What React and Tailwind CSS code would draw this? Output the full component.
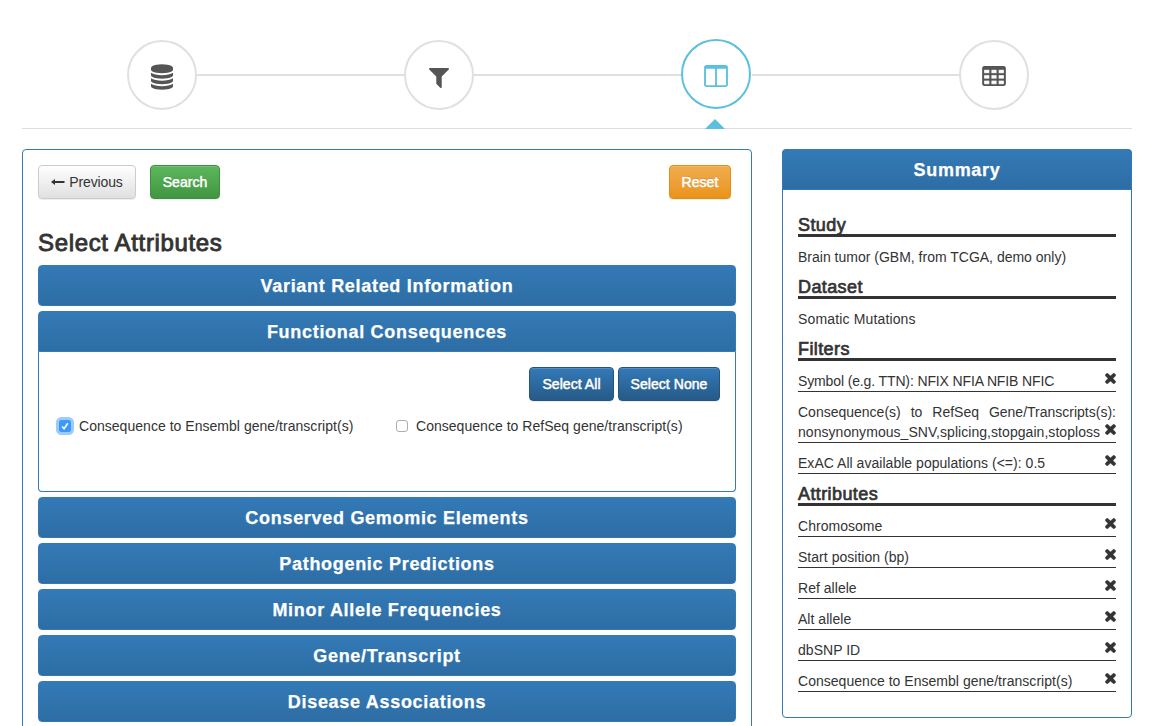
import React from "react";

const PATHS = {
  database:
    "M768 768q237 0 443-43t325-127v170q0 69-103 128t-280 93.5-385 34.5-385-34.5-280-93.5-103-128v-170q119 84 325 127t443 43zm0 768q237 0 443-43t325-127v170q0 69-103 128t-280 93.5-385 34.5-385-34.5-280-93.5-103-128v-170q119 84 325 127t443 43zm0-384q237 0 443-43t325-127v170q0 69-103 128t-280 93.5-385 34.5-385-34.5-280-93.5-103-128v-170q119 84 325 127t443 43zm0-1152q208 0 385 34.5t280 93.5 103 128v128q0 69-103 128t-280 93.5-385 34.5-385-34.5-280-93.5-103-128v-128q0-69 103-128t280-93.5 385-34.5z",
  filter:
    "M1403 39q17 41-14 70l-493 493v742q0 42-39 59-13 5-25 5-27 0-45-19l-256-256q-19-19-19-45v-486l-493-493q-31-29-14-70 17-39 59-39h1280q42 0 59 39z",
  columns:
    "M160 1408h608v-1152h-640v1120q0 13 9.5 22.5t22.5 9.5zm1376-32v-1120h-640v1152h608q13 0 22.5-9.5t9.5-22.5zm128-1216v1216q0 66-47 113t-113 47h-1344q-66 0-113-47t-47-113v-1216q0-66 47-113t113-47h1344q66 0 113 47t47 113z",
  table:
    "M160 0h1344q66 0 113 47t47 113v1088q0 66-47 113t-113 47h-1344q-66 0-113-47t-47-113v-1088q0-66 47-113t113-47zM160 256q-32 0-32 32v192q0 32 32 32h320q32 0 32-32v-192q0-32-32-32zM672 256q-32 0-32 32v192q0 32 32 32h320q32 0 32-32v-192q0-32-32-32zM1184 256q-32 0-32 32v192q0 32 32 32h320q32 0 32-32v-192q0-32-32-32zM160 640q-32 0-32 32v192q0 32 32 32h320q32 0 32-32v-192q0-32-32-32zM672 640q-32 0-32 32v192q0 32 32 32h320q32 0 32-32v-192q0-32-32-32zM1184 640q-32 0-32 32v192q0 32 32 32h320q32 0 32-32v-192q0-32-32-32zM160 1024q-32 0-32 32v192q0 32 32 32h320q32 0 32-32v-192q0-32-32-32zM672 1024q-32 0-32 32v192q0 32 32 32h320q32 0 32-32v-192q0-32-32-32zM1184 1024q-32 0-32 32v192q0 32 32 32h320q32 0 32-32v-192q0-32-32-32z",
  times:
    "M1298 1322q0 40-28 68l-136 136q-28 28-68 28t-68-28l-294-294-294 294q-28 28-68 28t-68-28l-136-136q-28-28-28-68t28-68l294-294-294-294q-28-28-28-68t28-68l136-136q28-28 68-28t68 28l294 294 294-294q28-28 68-28t68 28l136 136q28 28 28 68t-28 68l-294 294 294 294q28 28 28 68z",
};

function Glyph({ name, box, className }) {
  return (
    <svg viewBox={box} className={className} fill="currentColor" fillRule="evenodd" aria-hidden="true">
      <path d={PATHS[name]} />
    </svg>
  );
}

function RemoveIcon() {
  return (
    <Glyph
      name="times"
      box="90 346 1228 1228"
      className="mt-[2px] mr-[0.5px] size-[11px] shrink-0 stroke-current stroke-[50]"
    />
  );
}

function Connector() {
  return <div className="mt-[34px] h-[2px] flex-1 bg-[#e0e0e0]" />;
}

function Step({ children }) {
  return (
    <div className="flex size-[70px] shrink-0 justify-center rounded-full border-2 border-[#e0e0e0] bg-white text-[#555]">
      {children}
    </div>
  );
}

function Wizard() {
  return (
    <div className="mx-[22px] mr-[25px] flex h-[129px] items-start border-b border-[#ddd] pt-10 pr-[103px] pl-[105px]">
      <Step>
        <Glyph name="database" box="0 0 1536 1792" className="mt-[22px] mr-px h-[26px] w-[22px]" />
      </Step>
      <Connector />
      <Step>
        <Glyph name="filter" box="0 0 1408 1408" className="mt-[26px] size-5" />
      </Step>
      <Connector />
      <div className="relative -mt-px -mr-px -ml-px flex w-[72px] shrink-0 pr-[2px]">
        <div className="flex size-[70px] justify-center rounded-full border-2 border-[#5bc0de] bg-white text-[#5bc0de]">
          <Glyph name="columns" box="0 0 1664 1536" className="mt-[24px] h-[22px] w-[24px]" />
        </div>
        <svg viewBox="0 0 20 10" className="absolute top-[80px] left-[24px] h-[10px] w-5" aria-hidden="true">
          <path d="M10 0L20 10H0z" fill="#5bc0de" />
        </svg>
      </div>
      <Connector />
      <Step>
        <Glyph name="table" box="0 0 1664 1408" className="mt-6 h-5 w-6 stroke-current stroke-[20]" />
      </Step>
    </div>
  );
}

function Bar({ title, open }) {
  return (
    <div
      className={
        "flex h-[41px] items-center justify-center border border-[#337ab7] bg-linear-to-b from-[#337ab7] to-[#2e6da4] text-[18px] font-bold tracking-[0.7px] text-white [-webkit-text-stroke:0.25px_white] " +
        (open ? "rounded-t-[4px]" : "rounded-[4px]")
      }
    >
      <span className="pt-px">{title}</span>
    </div>
  );
}

const BUTTON = "flex h-[34px] items-center justify-center rounded-[4px] border text-[14px] leading-5";
const LIGHT_TEXT =
  " tracking-[0.05px] text-white [-webkit-text-stroke:0.5px_white] [text-shadow:0_-1px_0_rgba(0,0,0,0.2)] shadow-[inset_0_1px_0_rgba(255,255,255,0.15),0_1px_1px_rgba(0,0,0,0.075)]";

function Toolbar() {
  return (
    <div className="flex pr-[5px]">
      <button
        className={
          BUTTON +
          " w-[98px] gap-1 border-[#ccc] bg-linear-to-b from-white to-[#e0e0e0] tracking-[-0.12px] text-[#333] shadow-[inset_0_1px_0_rgba(255,255,255,0.15),0_1px_1px_rgba(0,0,0,0.075)]"
        }
      >
        <svg viewBox="0 0 14 8" className="h-2 w-[14px]" fill="currentColor" aria-hidden="true">
          <path d="M0 4L4 1V3H13.5V5H4V7z" />
        </svg>
        Previous
      </button>
      <button
        className={BUTTON + LIGHT_TEXT + " ml-[14px] w-[70px] border-[#3e8f3e] bg-linear-to-b from-[#5cb85c] to-[#419641]"}
      >
        Search
      </button>
      <button
        className={BUTTON + LIGHT_TEXT + " ml-auto w-[62px] border-[#e38d13] bg-linear-to-b from-[#f0ad4e] to-[#eb9316]"}
      >
        Reset
      </button>
    </div>
  );
}

function FunctionalConsequences() {
  const primary = BUTTON + LIGHT_TEXT + " border-[#245580] bg-linear-to-b from-[#337ab7] to-[#265a88]";
  return (
    <section>
      <Bar title="Functional Consequences" open />
      <div className="h-[140px] rounded-b-[4px] border border-t-0 border-[#337ab7] pt-[15px] pr-[15px] pl-5">
        <div className="flex justify-end gap-1">
          <button className={primary + " w-[85px]"}>Select All</button>
          <button className={primary + " w-[102px]"}>Select None</button>
        </div>
        <div className="mt-[15px] flex h-5 items-center text-[14px] tracking-[0.03px]">
          <label className="flex w-[337px] items-center">
            <span className="mr-2 flex size-3 items-center justify-center rounded-[2.5px] bg-[#3b99fc] shadow-[0_0_0_3px_#9dcbfb]">
              <svg viewBox="0 0 12 12" className="size-3" aria-hidden="true">
                <path d="M3.2 6.5L5.1 8.7L8.8 3.2" fill="none" stroke="white" strokeWidth="1.6" />
              </svg>
            </span>
            Consequence to Ensembl gene/transcript(s)
          </label>
          <label className="flex items-center">
            <span className="mr-2 size-3 rounded-[3px] border border-[#adadad] bg-white" />
            Consequence to RefSeq gene/transcript(s)
          </label>
        </div>
      </div>
    </section>
  );
}

function Heading({ children }) {
  return (
    <h4 className="h-[23px] border-b-[3px] border-[#333] pt-px text-[18px] leading-5 tracking-[0.4px] [-webkit-text-stroke:0.7px_#333]">
      {children}
    </h4>
  );
}

function Entry({ children, tight }) {
  return (
    <div className="mt-[10px] flex items-start border-b border-[#333]">
      <div className={"min-w-0 flex-1 leading-5 " + (tight ? "tracking-[-0.13px]" : "tracking-[0.03px]")}>
        {children}
      </div>
      <RemoveIcon />
    </div>
  );
}

const ATTRIBUTES = [
  "Chromosome",
  "Start position (bp)",
  "Ref allele",
  "Alt allele",
  "dbSNP ID",
  "Consequence to Ensembl gene/transcript(s)",
];

function Summary() {
  return (
    <aside className="h-[569px] w-[350px] rounded-[4px] border border-[#337ab7] text-[14px]">
      <div className="-mx-px -mt-px">
        <Bar title="Summary" open />
      </div>
      <div className="px-[15px] pt-[24px]">
        <Heading>Study</Heading>
        <p className="mt-[10px] mb-[9px] leading-5">Brain tumor (GBM, from TCGA, demo only)</p>
        <Heading>Dataset</Heading>
        <p className="mt-[10px] mb-[9px] leading-5 tracking-[0.15px]">Somatic Mutations</p>
        <Heading>Filters</Heading>
        <Entry tight>Symbol (e.g. TTN): NFIX NFIA NFIB NFIC</Entry>
        <div className="mt-[10px] border-b border-[#333] leading-5">
          <div className="flex justify-between">
            <span>Consequence(s)</span>
            <span>to</span>
            <span>RefSeq</span>
            <span>Gene/Transcripts(s):</span>
          </div>
          <div className="flex items-start justify-between">
            <span className="tracking-[0.05px]">nonsynonymous_SNV,splicing,stopgain,stoploss</span>
            <RemoveIcon />
          </div>
        </div>
        <Entry>ExAC All available populations (&lt;=): 0.5</Entry>
        <div className="mt-[9px]">
          <Heading>Attributes</Heading>
        </div>
        {ATTRIBUTES.map((name) => (
          <Entry key={name}>{name}</Entry>
        ))}
      </div>
    </aside>
  );
}

export default function App() {
  return (
    <div className="h-[726px] w-[1157px] overflow-hidden bg-white font-['Liberation_Sans',Arial,sans-serif] text-[#333]">
      <Wizard />
      <main className="mt-5 ml-[22px] flex items-start gap-[30px]">
        <section className="h-[640px] w-[730px] rounded-[4px] border border-[#337ab7] p-[15px]">
          <Toolbar />
          <h3 className="mt-[30px] mb-[9px] text-[24px] leading-[27px] tracking-[0.65px] [-webkit-text-stroke:0.9px_#333]">
            Select Attributes
          </h3>
          <div className="flex flex-col gap-[5px]">
            <Bar title="Variant Related Information" />
            <FunctionalConsequences />
            <Bar title="Conserved Gemomic Elements" />
            <Bar title="Pathogenic Predictions" />
            <Bar title="Minor Allele Frequencies" />
            <Bar title="Gene/Transcript" />
            <Bar title="Disease Associations" />
          </div>
        </section>
        <Summary />
      </main>
    </div>
  );
}
